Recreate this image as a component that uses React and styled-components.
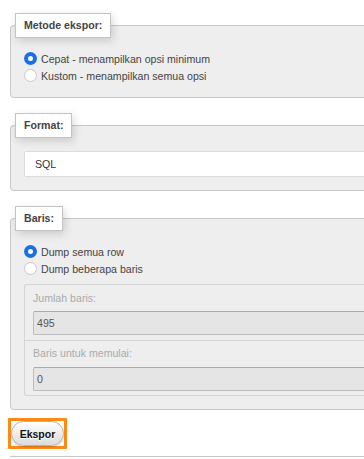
import React from 'react';
import styled, { createGlobalStyle } from 'styled-components';

const GlobalStyle = createGlobalStyle`
  html, body {
    margin: 0;
    padding: 0;
    background: #fff;
  }
  body {
    font-family: "Liberation Sans", Arial, sans-serif;
    font-size: 10.6px;
    color: #444;
  }
`;

const ExportPage = () => {
  return (
    <Wrapper>
      <GlobalStyle />

      <Group>
        <Legend>Metode ekspor:</Legend>
        <RadioRow>
          <Radio type='radio' name='method' defaultChecked />
          Cepat - menampilkan opsi minimum
        </RadioRow>
        <RadioRow>
          <Radio type='radio' name='method' />
          Kustom - menampilkan semua opsi
        </RadioRow>
      </Group>

      <Group>
        <Legend>Format:</Legend>
        <Select>SQL</Select>
      </Group>

      <Group>
        <Legend>Baris:</Legend>
        <RadioRow>
          <Radio type='radio' name='rows' defaultChecked />
          Dump semua row
        </RadioRow>
        <RadioRow>
          <Radio type='radio' name='rows' />
          Dump beberapa baris
        </RadioRow>

        <RowOptions>
          <OptionItem>
            <OptionLabel>Jumlah baris:</OptionLabel>
            <TextInput type='text' defaultValue='495' disabled />
          </OptionItem>
          <OptionItem divided>
            <OptionLabel divided>Baris untuk memulai:</OptionLabel>
            <TextInput type='text' defaultValue='0' disabled />
          </OptionItem>
        </RowOptions>
      </Group>

      <FocusRing>
        <Button type='button'>Ekspor</Button>
      </FocusRing>

      <Divider />
    </Wrapper>
  );
};

const Wrapper = styled.div`
  width: 364px;
  box-sizing: border-box;
  padding: 13px 0 2px 10px;
  overflow: hidden;
`;

const Group = styled.fieldset`
  margin: 0 -40px 15px 0;
  padding: 12px 0 13px 13px;
  background: #eee;
  border: 1px solid #c8c8c8;
  border-radius: 4px;
  min-width: 0;

  &:last-of-type {
    margin-bottom: 8px;
  }
`;

const Legend = styled.legend`
  margin-left: -9px;
  padding: 0 8px;
  height: 25px;
  box-sizing: border-box;
  line-height: 23px;
  background: #fff;
  border: 1px solid #c4c4c4;
  box-shadow: 2px 3px 9px rgba(0, 0, 0, 0.15);
  font-weight: bold;
  color: #444;
`;

const RadioRow = styled.label`
  display: flex;
  align-items: center;
  height: 17px;
  color: #444;
`;

const Radio = styled.input`
  appearance: none;
  width: 13px;
  height: 13px;
  margin: 0 4px 0 0;
  border-radius: 50%;
  border: 1px solid #c9c9c9;
  background: #fff;
  box-sizing: border-box;

  &:checked {
    border: none;
    box-shadow: inset 0 0 0 4px #1b6fe6;
  }
`;

const Select = styled.div`
  margin-top: 1px;
  height: 26px;
  box-sizing: border-box;
  padding-left: 10px;
  line-height: 24px;
  background: #fff;
  border: 1px solid #dcdcdc;
  border-radius: 2px;
  color: #333;
`;

const RowOptions = styled.ul`
  list-style: none;
  margin: 7px 0 0 0;
  padding: 0;
  border: 1px solid #d4d4d4;
  border-right: none;
  border-radius: 3px 0 0 3px;
`;

const OptionItem = styled.li`
  padding: ${({ divided }) => (divided ? '5px 0 4px 8px' : '6px 0 5px 8px')};
  border-top: ${({ divided }) => (divided ? '1px solid #d4d4d4' : 'none')};
`;

const OptionLabel = styled.span`
  display: block;
  line-height: 14px;
  margin-bottom: ${({ divided }) => (divided ? '7px' : '6px')};
  color: #aaa;
`;

const TextInput = styled.input`
  display: block;
  width: 100%;
  height: 24px;
  box-sizing: border-box;
  margin: 0;
  padding: 0 3px;
  font: inherit;
  color: #555;
  background: #e5e5e5;
  border: 1px solid #bdbdbd;
  border-top-color: #aaa;
  border-right: none;
  border-radius: 2px 0 0 2px;
`;

const FocusRing = styled.span`
  display: inline-block;
  margin-left: -2px;
  border: 3px solid #ff8a14;
  border-radius: 1px;
  line-height: 0;
`;

const Button = styled.button`
  width: 53px;
  height: 25px;
  margin: 0;
  padding: 0;
  font-family: "Liberation Sans", Arial, sans-serif;
  font-size: 10.5px;
  font-weight: bold;
  color: #111;
  text-shadow: 0 1px 0 #fff;
  background: linear-gradient(#ffffff, #dcdcdc);
  border: 1px solid #b4b4b4;
  border-radius: 13px;
  box-shadow: 0 1px 2px rgba(0, 0, 0, 0.2);
`;

const Divider = styled.div`
  margin-top: 7px;
  border-top: 1px solid #c6c6c6;
`;

export default ExportPage;
